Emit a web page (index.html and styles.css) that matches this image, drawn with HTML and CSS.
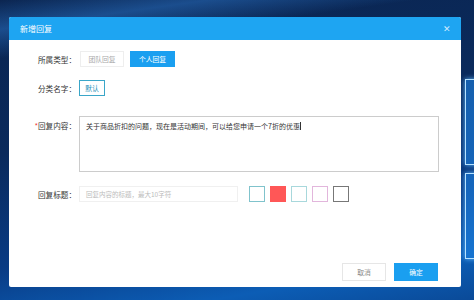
FILE: index.html
```html
<!DOCTYPE html>
<html>
<head>
	<meta charset="UTF-8">
	<title>新增回复</title>
	<link rel="stylesheet" href="styles.css">
</head>
<body>
	<div class="desk-pane pane-top"></div>
	<div class="desk-pane pane-bottom"></div>
	<div id="dialog">
		<div class="dlg-head">
			<span class="dlg-title">新增回复</span>
			<span class="dlg-close">&#x2715;</span>
		</div>
		<div class="dlg-body">
			<div class="row">
				<span class="label">所属类型：</span>
				<span class="btn btn-plain">团队回复</span>
				<span class="btn btn-blue">个人回复</span>
			</div>
			<div class="row row-2">
				<span class="label">分类名字：</span>
				<span class="btn btn-tag">默认</span>
			</div>
			<div class="row row-3">
				<span class="label label-top"><i class="req">*</i>回复内容：</span>
				<div class="textarea">关于商品折扣的问题，现在是活动期间，可以给您申请一个7折的优惠<b class="caret"></b></div>
			</div>
			<div class="row row-4">
				<span class="label">回复标题：</span>
				<div class="input">回复内容的标题，最大10字符</div>
				<div class="colors">
					<span class="sq sq-1"></span>
					<span class="sq sq-2"></span>
					<span class="sq sq-3"></span>
					<span class="sq sq-4"></span>
					<span class="sq sq-5"></span>
				</div>
			</div>
		</div>
		<div class="dlg-foot">
			<span class="btn btn-cancel">取消</span>
			<span class="btn btn-ok">确定</span>
		</div>
	</div>
</body>
</html>
```

FILE: styles.css
```css
*{
	margin: 0;
	padding: 0;
}
body{
	width: 474px;
	height: 300px;
	overflow: hidden;
	position: relative;
	font-family: "Noto Sans CJK SC", "Liberation Sans", sans-serif;
	background:
		linear-gradient(172deg, rgba(40,110,190,0) 0%, rgba(40,110,190,0.55) 8%, rgba(40,110,190,0) 16%),
		linear-gradient(170deg, #0b2550 0%, #0a2a5c 40%, #093b84 70%, #0c5db5 88%, #0a4a98 100%);
}
.desk-pane{
	position: absolute;
	left: 465px;
	width: 20px;
	border: 1px solid #b6e2ff;
	box-shadow: 0 0 5px #5fb8ff;
	background: rgba(30,130,225,0.6);
}
.pane-top{
	top: 79px;
	height: 84px;
}
.pane-bottom{
	top: 173px;
	height: 84px;
}
#dialog{
	position: relative;
	margin: 17px 0 0 9px;
	width: 452px;
	height: 270px;
	background: #fff;
	border-radius: 2px;
	display: flex;
	flex-direction: column;
}
.dlg-head{
	height: 23px;
	background: #1ea5f2;
	color: #fff;
	display: flex;
	align-items: center;
	justify-content: space-between;
	padding: 0 10px 0 11px;
	border-radius: 2px 2px 0 0;
}
.dlg-title{
	font-size: 8px;
}
.dlg-close{
	font-size: 9px;
	color: #cfeaff;
}
.dlg-body{
	flex: 1;
	padding-top: 11px;
}
.row{
	display: flex;
	align-items: center;
	height: 16px;
}
.row-2{
	margin-top: 13px;
}
.row-3{
	margin-top: 20px;
	height: 56px;
	align-items: flex-start;
}
.row-4{
	margin-top: 14px;
}
.label{
	width: 67px;
	text-align: right;
	font-size: 7.6px;
	color: #333;
	margin-right: 3px;
	white-space: nowrap;
}
.label-top{
	padding-top: 4px;
}
.req{
	font-style: normal;
	color: #e33;
}
.btn{
	display: inline-flex;
	align-items: center;
	justify-content: center;
	box-sizing: border-box;
	height: 16px;
	font-size: 6.8px;
}
.btn-plain{
	width: 44px;
	margin-left: 1px;
	border: 1px solid #eee;
	color: #aaa;
}
.btn-blue{
	width: 45px;
	margin-left: 6px;
	background: #1a9ff0;
	color: #fff;
}
.btn-tag{
	width: 26px;
	border: 1px solid #3aa6c8;
	color: #2a8fb8;
}
.textarea{
	box-sizing: border-box;
	width: 360px;
	height: 56px;
	border: 1px solid #ccc;
	padding: 4px 6px;
	font-size: 7px;
	color: #333;
}
.caret{
	display: inline-block;
	width: 1px;
	height: 8px;
	background: #333;
	vertical-align: -1px;
}
.input{
	box-sizing: border-box;
	width: 159px;
	height: 16px;
	border: 1px solid #f0f0f0;
	padding-left: 6px;
	font-size: 6.5px;
	color: #bbb;
	display: flex;
	align-items: center;
}
.colors{
	display: flex;
	gap: 5px;
	margin-left: 11px;
}
.sq{
	display: block;
	box-sizing: border-box;
	width: 16px;
	height: 16px;
	border: 1px solid #ccc;
}
.sq-1{
	border-color: #80c3cc;
}
.sq-2{
	background: #ff5757;
	border-color: #ff5757;
}
.sq-3{
	border-color: #a8d8dc;
}
.sq-4{
	border-color: #e2b6dc;
}
.sq-5{
	border-color: #777;
}
.dlg-foot{
	display: flex;
	justify-content: flex-end;
	gap: 8px;
	padding: 0 23px 6px 0;
}
.btn-cancel,
.btn-ok{
	width: 44px;
	height: 18px;
}
.btn-cancel{
	border: 1px solid #e6e6e6;
	color: #888;
}
.btn-ok{
	background: #1a9ff0;
	color: #fff;
}
```
